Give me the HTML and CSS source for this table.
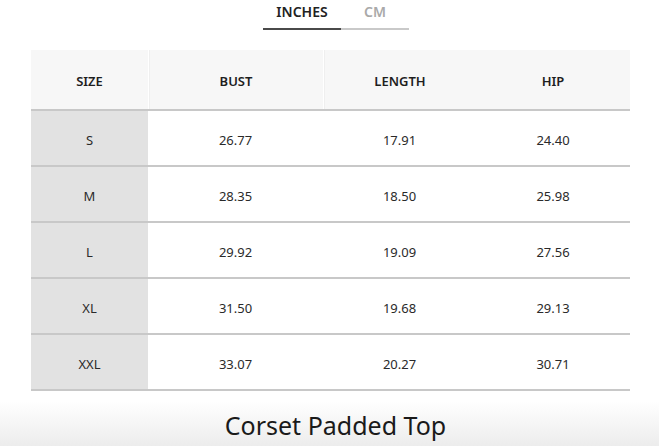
FILE: index.html
```html
<!DOCTYPE html>
<html>
<head>
<meta charset="utf-8">
<link rel="stylesheet" href="styles.css">
</head>
<body>
<div class="tabs">
  <div class="tab active">INCHES</div>
  <div class="tab">CM</div>
</div>
<div class="table">
  <div class="row head">
    <div class="cell c1">SIZE</div>
    <div class="cell sep">BUST</div>
    <div class="cell sep">LENGTH</div>
    <div class="cell">HIP</div>
  </div>
  <div class="row"><div class="cell c1">S</div><div class="cell">26.77</div><div class="cell">17.91</div><div class="cell">24.40</div></div>
  <div class="row"><div class="cell c1">M</div><div class="cell">28.35</div><div class="cell">18.50</div><div class="cell">25.98</div></div>
  <div class="row"><div class="cell c1">L</div><div class="cell">29.92</div><div class="cell">19.09</div><div class="cell">27.56</div></div>
  <div class="row"><div class="cell c1">XL</div><div class="cell">31.50</div><div class="cell">19.68</div><div class="cell">29.13</div></div>
  <div class="row"><div class="cell c1">XXL</div><div class="cell">33.07</div><div class="cell">20.27</div><div class="cell">30.71</div></div>
</div>
<div class="title">Corset Padded Top</div>
</body>
</html>
```
FILE: styles.css
```css
html, body {
  margin: 0;
  padding: 0;
  background: #fff;
  font-family: "Noto Sans", "Open Sans", sans-serif;
  color: #222;
  width: 659px;
  height: 446px;
  overflow: hidden;
}
.tabs {
  display: flex;
  width: 146px;
  margin: 0 0 0 263px;
  height: 30px;
}
.tab {
  box-sizing: border-box;
  height: 30px;
  padding-top: 2px;
  font-size: 14px;
  font-weight: 600;
  text-align: center;
  border-bottom: 2px solid #c9c9c9;
  color: #a9a9a9;
}
.tab.active {
  width: 78px;
  color: #222;
  border-bottom-color: #4a4a4a;
}
.tab:not(.active) {
  width: 68px;
}
.table {
  margin: 20px 0 0 31px;
  width: 599px;
}
.row {
  display: grid;
  grid-template-columns: 117px 175px 153px 154px;
  height: 54px;
  border-bottom: 2px solid #c8c8c8;
}
.row.head {
  height: 59px;
  background: #f7f7f7;
}
.cell {
  display: flex;
  align-items: center;
  justify-content: center;
  padding-top: 3px;
  font-size: 13px;
  color: #2a2a2a;
}
.head .cell {
  padding-top: 2px;
  font-weight: 600;
  color: #1e1e1e;
}
.head .cell.sep {
  border-left: 1px solid #ffffff;
  box-shadow: inset 1px 0 0 #efefef;
}
.c1 {
  background: #e2e2e2;
}
.head .c1 {
  background: #f7f7f7;
}
.title {
  margin-top: 10px;
  height: 46px;
  box-sizing: border-box;
  padding-top: 4px;
  padding-left: 12px;
  background: linear-gradient(#ffffff, #ececec);
  text-align: center;
  font-size: 25px;
  line-height: 40px;
  color: #1a1a1a;
}
```
